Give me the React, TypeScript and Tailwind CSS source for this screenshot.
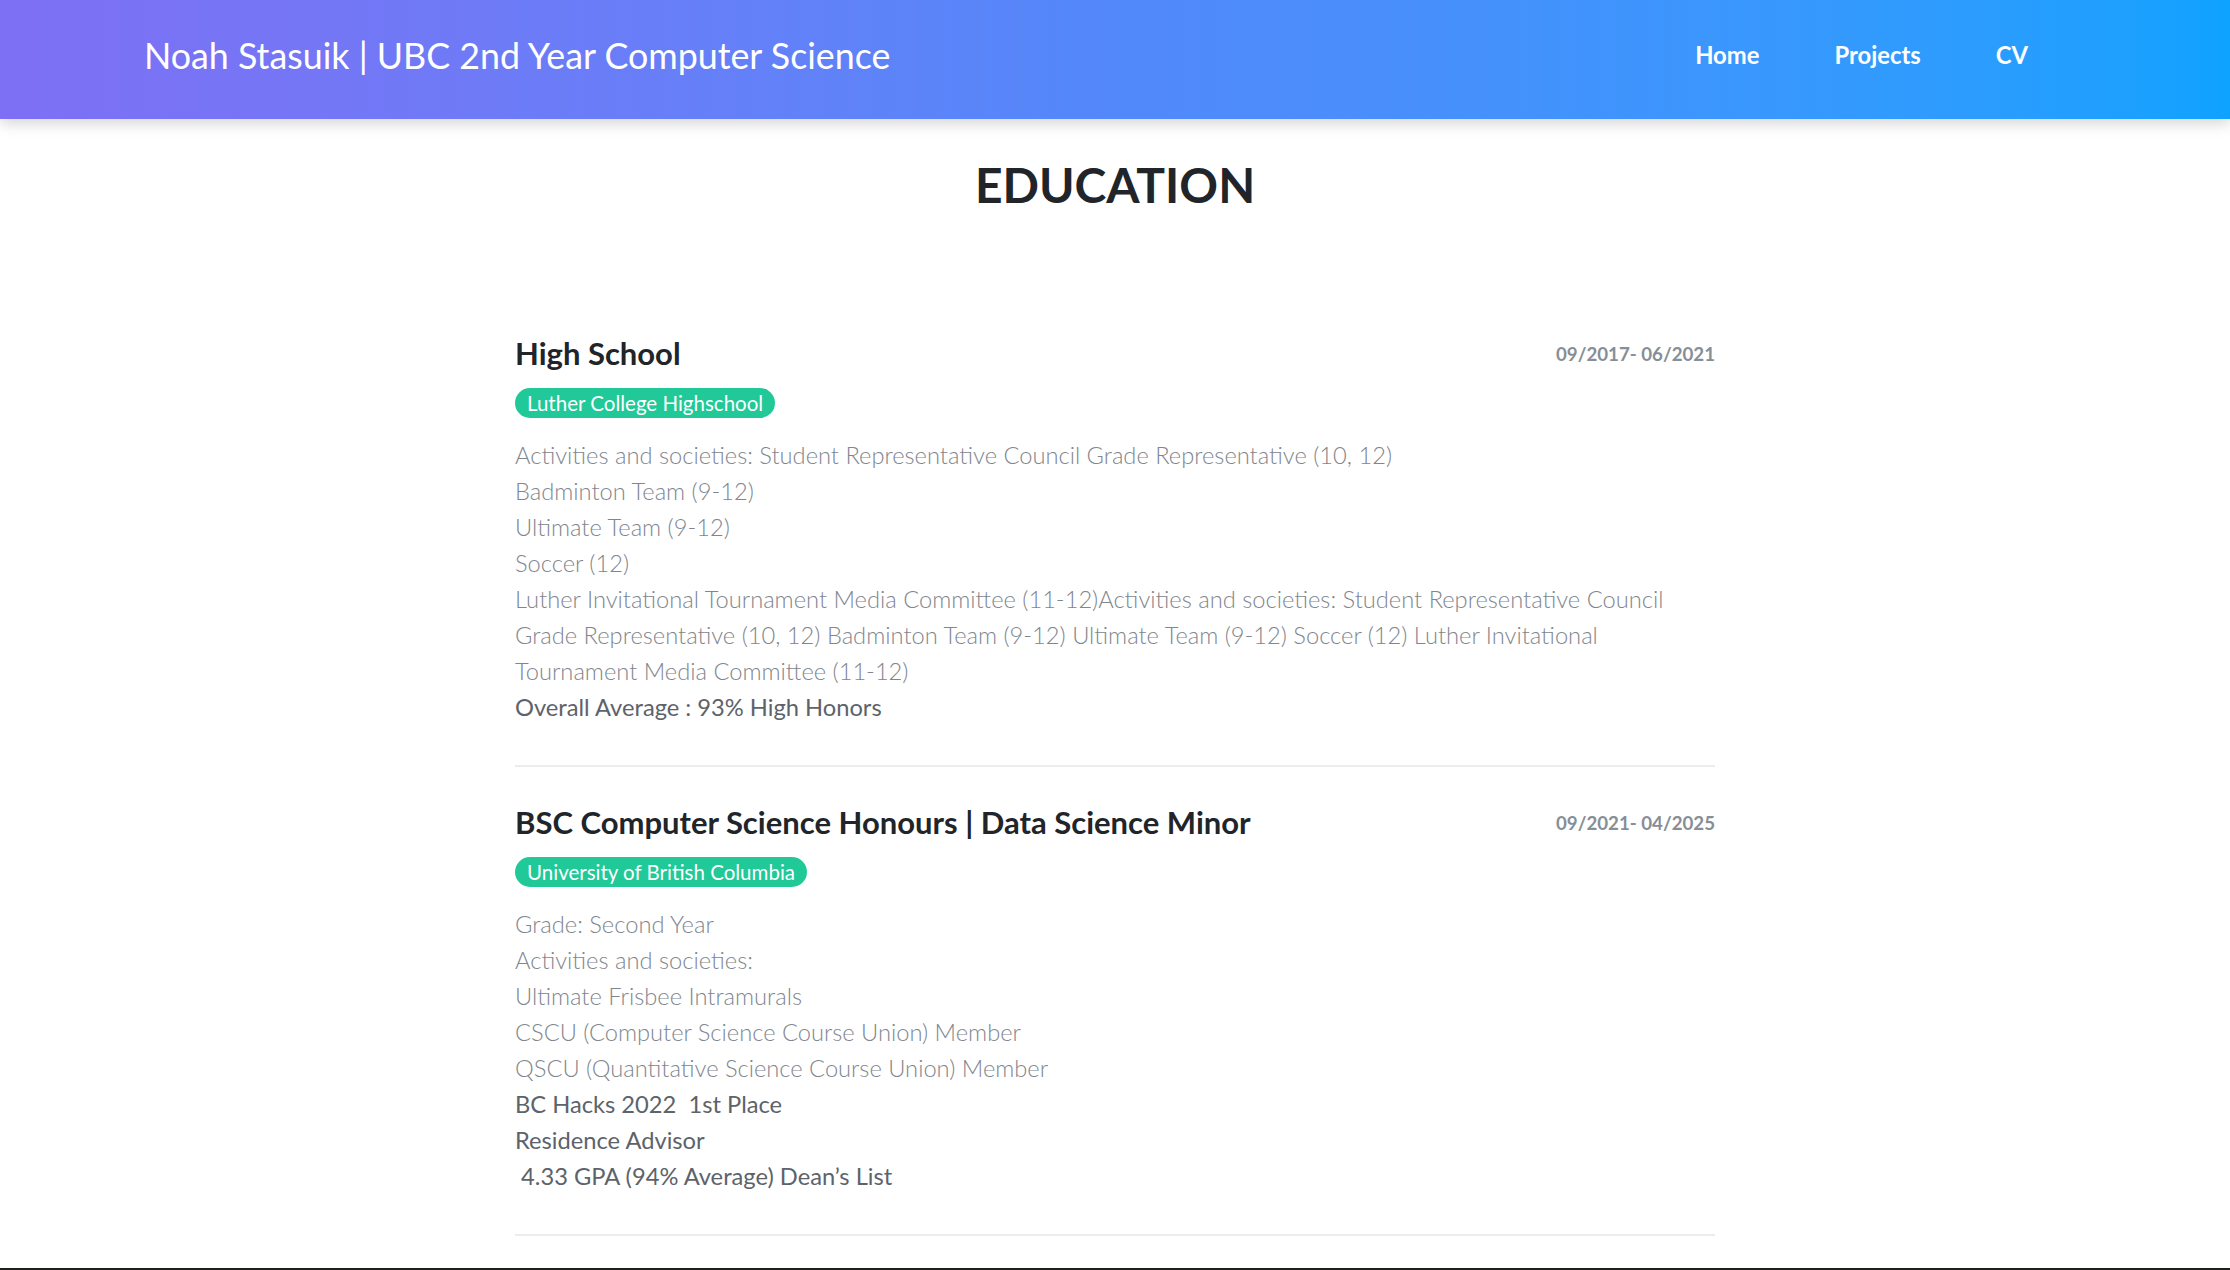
import React from 'react';

type Entry = {
  title: string;
  dates: string;
  school: string;
  light: string[];
  regular: string[];
};

const entries: Entry[] = [
  {
    title: 'High School',
    dates: '09/2017- 06/2021',
    school: 'Luther College Highschool',
    light: [
      'Activities and societies: Student Representative Council Grade Representative (10, 12)',
      'Badminton Team (9-12)',
      'Ultimate Team (9-12)',
      'Soccer (12)',
      'Luther Invitational Tournament Media Committee (11-12)Activities and societies: Student Representative Council Grade Representative (10, 12) Badminton Team (9-12) Ultimate Team (9-12) Soccer (12) Luther Invitational Tournament Media Committee (11-12)',
    ],
    regular: ['Overall Average : 93% High Honors'],
  },
  {
    title: 'BSC Computer Science Honours | Data Science Minor',
    dates: '09/2021- 04/2025',
    school: 'University of British Columbia',
    light: [
      'Grade: Second Year',
      'Activities and societies:',
      'Ultimate Frisbee Intramurals',
      'CSCU (Computer Science Course Union) Member',
      'QSCU (Quantitative Science Course Union) Member',
    ],
    regular: ['BC Hacks 2022  1st Place', 'Residence Advisor', '\u00a04.33 GPA (94% Average) Dean\u2019s List'],
  },
];

function Header() {
  return (
    <header className="relative z-10 h-[119px] bg-gradient-to-r from-[#7e6ff4] via-[#5288fa] to-[#0ea2ff] shadow-[0_4px_14px_rgba(0,0,0,0.18)]">
      <div className="flex h-full items-center justify-between pb-[8px] pl-[144px] pr-[202px]">
        <span className="text-[35.8px] font-normal text-white">
          Noah Stasuik | UBC 2nd Year Computer Science
        </span>
        <nav className="flex items-center gap-[75px] text-[23.8px] font-bold text-white">
          <a href="#">Home</a>
          <a href="#">Projects</a>
          <a href="#">CV</a>
        </nav>
      </div>
    </header>
  );
}

function EducationItem({ entry }: { entry: Entry }) {
  return (
    <div className="border-b-2 border-[#ececec] pb-[40px] pt-[37px] first:pt-0">
      <div className="flex items-center justify-between">
        <h3 className="text-[31px] font-bold leading-[36px] text-[#212529]">{entry.title}</h3>
        <span className="mt-[2px] text-[18.7px] font-bold text-[#868e96]">{entry.dates}</span>
      </div>
      <div className="mt-[17px]">
        <span className="inline-flex h-[30px] items-center rounded-full bg-[#20c997] px-[12px] text-[20.5px] text-white">
          {entry.school}
        </span>
      </div>
      <div className="mt-[19px] text-[23.7px] leading-[36px]">
        {entry.light.map((l, i) => (
          <p key={i} className="font-light text-[#7f868e]">
            {l}
          </p>
        ))}
        {entry.regular.map((l, i) => (
          <p key={i} className="whitespace-pre font-normal text-[#5d636a]">
            {l}
          </p>
        ))}
      </div>
    </div>
  );
}

export default function App() {
  return (
    <div className="min-h-[1270px] bg-white font-['Lato','Liberation_Sans',sans-serif]">
      <Header />
      <main>
        <h2 className="mt-[37px] text-center text-[48px] font-bold leading-[58px] text-[#212529]">
          EDUCATION
        </h2>
        <div className="mx-auto mt-[121px] w-[1200px]">
          {entries.map((e) => (
            <EducationItem key={e.title} entry={e} />
          ))}
        </div>
        <div className="h-[32px]" />
      </main>
      <footer className="h-[200px] bg-[#1e211d]" />
    </div>
  );
}
